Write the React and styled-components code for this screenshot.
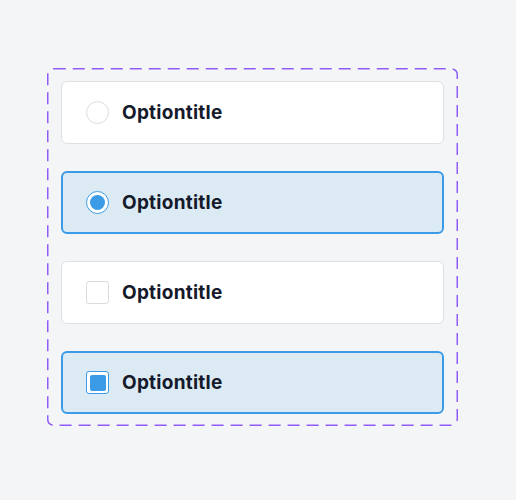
import React from 'react';
import styled, { createGlobalStyle } from 'styled-components';

const GlobalStyle = createGlobalStyle`
  html, body {
    margin: 0;
    background: #f4f5f7;
    font-family: 'Inter', 'Liberation Sans', sans-serif;
  }
`;

const Page = styled.div`
  width: 516px;
  height: 500px;
  box-sizing: border-box;
  padding: 68px 0 0 47px;
  background: #f4f5f7;
`;

const Frame = styled.div`
  position: relative;
  width: 411px;
  box-sizing: border-box;
  padding: 13px 14px 12px 14px;
  display: flex;
  flex-direction: column;
  gap: 27px;
`;

/* Borde punteado dibujado encima del marco */
const DashedOutline = styled.svg`
  position: absolute;
  inset: 0;
  width: 100%;
  height: 100%;
  overflow: visible;
  pointer-events: none;
`;

const Option = styled.label`
  display: flex;
  align-items: center;
  gap: 13px;
  height: 63px;
  box-sizing: border-box;
  padding: 0 0 0 ${p => (p.$selected ? 23 : 24)}px;
  border-radius: 6px;
  border: ${p => (p.$selected ? '2px solid #3b9be6' : '1.5px solid #dfe0e3')};
  background: ${p => (p.$selected ? '#dbeaf3' : '#ffffff')};
  cursor: pointer;
`;

const Radio = styled.span`
  width: 23px;
  height: 23px;
  box-sizing: border-box;
  border-radius: 50%;
  border: 1.5px solid ${p => (p.$checked ? '#3b9be6' : '#dcdcde')};
  background: #fff;
  display: flex;
  align-items: center;
  justify-content: center;
  flex-shrink: 0;

  &::after {
    content: '';
    display: ${p => (p.$checked ? 'block' : 'none')};
    width: 15px;
    height: 15px;
    border-radius: 50%;
    background: #3b9be6;
  }
`;

const Checkbox = styled.span`
  width: 23px;
  height: 23px;
  box-sizing: border-box;
  border-radius: 3px;
  border: 1.5px solid ${p => (p.$checked ? '#3b9be6' : '#dcdcde')};
  background: #fff;
  display: flex;
  align-items: center;
  justify-content: center;
  flex-shrink: 0;

  &::after {
    content: '';
    display: ${p => (p.$checked ? 'block' : 'none')};
    width: 16px;
    height: 16px;
    border-radius: 2px;
    background: #3b9be6;
  }
`;

const Title = styled.span`
  font-size: 19px;
  font-weight: 700;
  color: #151a2b;
  letter-spacing: 0.25px;
`;

const options = [
  { kind: 'radio', checked: false },
  { kind: 'radio', checked: true },
  { kind: 'checkbox', checked: false },
  { kind: 'checkbox', checked: true },
];

export default function App() {
  return (
    <>
      <GlobalStyle />
      <Page>
        <Frame>
          <DashedOutline>
            <rect
              x="0.75"
              y="0.75"
              width="calc(100% - 1.5px)"
              height="calc(100% - 1.5px)"
              rx="6"
              fill="none"
              stroke="#8f5cf7"
              strokeWidth="1.5"
              strokeDasharray="12 7"
            />
          </DashedOutline>
          {options.map((opt, i) => (
            <Option key={i} $selected={opt.checked}>
              {opt.kind === 'radio'
                ? <Radio $checked={opt.checked} />
                : <Checkbox $checked={opt.checked} />}
              <Title>Optiontitle</Title>
            </Option>
          ))}
        </Frame>
      </Page>
    </>
  );
}
